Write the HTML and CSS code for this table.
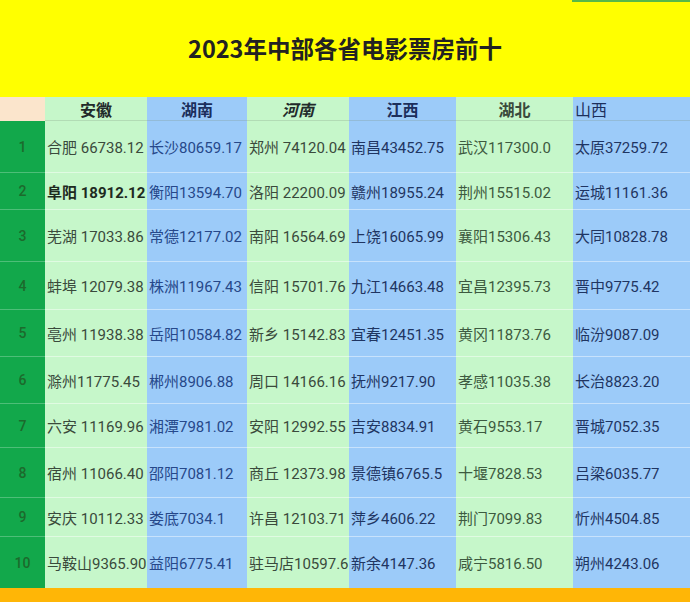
FILE: index.html
```html
<!DOCTYPE html>
<html lang="zh-CN">
<head>
<meta charset="utf-8">
<title>2023年中部各省电影票房前十</title>
<link rel="stylesheet" href="styles.css">
</head>
<body>
<div class="sheet">
  <div class="title">2023年中部各省电影票房前十</div>
  <div class="board">
    <div class="cell rank head"></div>
    <div class="cell g h c1">安徽</div>
    <div class="cell b h c2">湖南</div>
    <div class="cell g h c3 it">河南</div>
    <div class="cell b h c4">江西</div>
    <div class="cell g h c5">湖北</div>
    <div class="cell b h c6 left">山西</div>

    <div class="cell rank">1</div>
    <div class="cell g c1">合肥 66738.12</div>
    <div class="cell b c2">长沙80659.17</div>
    <div class="cell g c3">郑州 74120.04</div>
    <div class="cell b c4">南昌43452.75</div>
    <div class="cell g c5">武汉117300.0</div>
    <div class="cell b c6">太原37259.72</div>

    <div class="cell rank">2</div>
    <div class="cell g c1 bold">阜阳 18912.12</div>
    <div class="cell b c2">衡阳13594.70</div>
    <div class="cell g c3">洛阳 22200.09</div>
    <div class="cell b c4">赣州18955.24</div>
    <div class="cell g c5">荆州15515.02</div>
    <div class="cell b c6">运城11161.36</div>

    <div class="cell rank">3</div>
    <div class="cell g c1">芜湖 17033.86</div>
    <div class="cell b c2">常德12177.02</div>
    <div class="cell g c3">南阳 16564.69</div>
    <div class="cell b c4">上饶16065.99</div>
    <div class="cell g c5">襄阳15306.43</div>
    <div class="cell b c6">大同10828.78</div>

    <div class="cell rank">4</div>
    <div class="cell g c1">蚌埠 12079.38</div>
    <div class="cell b c2">株洲11967.43</div>
    <div class="cell g c3">信阳 15701.76</div>
    <div class="cell b c4">九江14663.48</div>
    <div class="cell g c5">宜昌12395.73</div>
    <div class="cell b c6">晋中9775.42</div>

    <div class="cell rank">5</div>
    <div class="cell g c1">亳州 11938.38</div>
    <div class="cell b c2">岳阳10584.82</div>
    <div class="cell g c3">新乡 15142.83</div>
    <div class="cell b c4">宜春12451.35</div>
    <div class="cell g c5">黄冈11873.76</div>
    <div class="cell b c6">临汾9087.09</div>

    <div class="cell rank">6</div>
    <div class="cell g c1">滁州11775.45</div>
    <div class="cell b c2">郴州8906.88</div>
    <div class="cell g c3">周口 14166.16</div>
    <div class="cell b c4">抚州9217.90</div>
    <div class="cell g c5">孝感11035.38</div>
    <div class="cell b c6">长治8823.20</div>

    <div class="cell rank">7</div>
    <div class="cell g c1">六安 11169.96</div>
    <div class="cell b c2">湘潭7981.02</div>
    <div class="cell g c3">安阳 12992.55</div>
    <div class="cell b c4">吉安8834.91</div>
    <div class="cell g c5">黄石9553.17</div>
    <div class="cell b c6">晋城7052.35</div>

    <div class="cell rank">8</div>
    <div class="cell g c1">宿州 11066.40</div>
    <div class="cell b c2">邵阳7081.12</div>
    <div class="cell g c3">商丘 12373.98</div>
    <div class="cell b c4">景德镇6765.5</div>
    <div class="cell g c5">十堰7828.53</div>
    <div class="cell b c6">吕梁6035.77</div>

    <div class="cell rank">9</div>
    <div class="cell g c1">安庆 10112.33</div>
    <div class="cell b c2">娄底7034.1</div>
    <div class="cell g c3">许昌 12103.71</div>
    <div class="cell b c4">萍乡4606.22</div>
    <div class="cell g c5">荆门7099.83</div>
    <div class="cell b c6">忻州4504.85</div>

    <div class="cell rank last">10</div>
    <div class="cell g c1 last">马鞍山9365.90</div>
    <div class="cell b c2 last">益阳6775.41</div>
    <div class="cell g c3 last">驻马店10597.6</div>
    <div class="cell b c4 last">新余4147.36</div>
    <div class="cell g c5 last">咸宁5816.50</div>
    <div class="cell b c6 last">朔州4243.06</div>
  </div>
  <div class="footer"></div>
</div>
</body>
</html>
```
FILE: styles.css
```css
html, body {
  margin: 0;
  padding: 0;
  background: #ffffff;
}

body {
  font-family: Roboto, "Noto Sans CJK SC", sans-serif;
  width: 700px;
  height: 602px;
  overflow: hidden;
}

.sheet {
  width: 690px;
}

.title {
  position: relative;
  height: 97px;
  box-sizing: border-box;
  padding-bottom: 2px;
  background: #ffff00;
  display: flex;
  align-items: center;
  justify-content: center;
  font-family: "Noto Sans CJK SC", sans-serif;
  font-weight: 700;
  font-size: 23.5px;
  color: #222222;
}

.title::before {
  content: "";
  position: absolute;
  top: 0;
  left: 572px;
  width: 118px;
  height: 2px;
  background: #57b847;
}

.board {
  display: grid;
  grid-template-columns: 45px 102px 100px 102px 107px 117px 117px;
  grid-template-rows: 24px 52px 37px 52px 48px 47px 47px 44px 50px 39px 51px;
}

.cell {
  box-sizing: border-box;
  display: flex;
  align-items: center;
  padding-left: 2px;
  font-size: 15px;
  white-space: nowrap;
  overflow: hidden;
  border-bottom: 1px solid rgba(255, 255, 255, 0.45);
}

.cell.last {
  border-bottom: none;
}

.g {
  background: #c6f7ca;
  color: #3a4a3c;
}

.b {
  background: #9ccbf9;
  color: #1f3562;
}

.c2 {
  color: #26488a;
}

.c5 {
  color: #3d5a40;
}

.rank {
  background: #12a84b;
  color: #1c6a2c;
  justify-content: center;
  padding-left: 0;
  font-size: 14px;
  font-weight: 500;
  border-bottom: 1px solid rgba(255, 255, 255, 0.25);
}

.rank.head {
  background: #fbe5cc;
  border-bottom: none;
}

.h {
  justify-content: center;
  padding-left: 0;
  font-family: "Noto Sans CJK SC", sans-serif;
  font-weight: 700;
  font-size: 16px;
  color: #222a2a;
  border-bottom: 1px solid rgba(120, 140, 120, 0.25);
}

.h.b {
  color: #1c2f5c;
}

.h.c5 {
  color: #3a4a3c;
  font-weight: 600;
}

.h.left {
  justify-content: flex-start;
  padding-left: 2px;
  font-weight: 400;
  color: #1c2f5c;
}

.it {
  font-style: italic;
}

.bold {
  font-weight: 700;
  color: #1e2a1f;
}

.footer {
  height: 14px;
  background: #ffb606;
}
```
